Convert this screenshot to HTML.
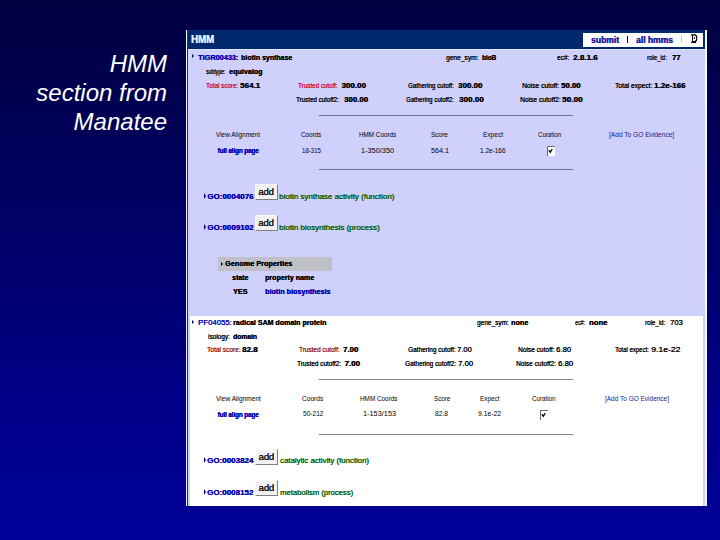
<!DOCTYPE html>
<html><head><meta charset="utf-8"><style>
html,body{margin:0;padding:0;}
body{width:720px;height:540px;overflow:hidden;position:relative;
background:linear-gradient(to bottom,#000040 0%,#00006e 50%,#00008a 76%,#000098 100%);
font-family:"Liberation Sans",sans-serif;}
.t{position:absolute;white-space:nowrap;line-height:1;color:#000;text-shadow:0.35px 0 0 currentColor;}
.r{position:absolute;}
.b{font-weight:bold;}
.thin{text-shadow:none;}
.mid{text-shadow:0.2px 0 0 currentColor;}
.hw{color:#e8f0ff;}
.blue{color:#0000b0;}
.blue2{color:#1a1aa0;}
.blue3{color:#202080;}
.red{color:#d01030;}
.red2{color:#a02020;}
.green{color:#006000;text-shadow:0.3px 0 0 #006000;}
.btn{background:#f2f2f2;border-top:1px solid #fafafa;border-left:1px solid #fafafa;border-right:1.7px solid #808080;border-bottom:1.7px solid #808080;box-sizing:border-box;}
.chk{background:#fff;border-top:1.1px solid #6a6a78;border-left:1px solid #6a6a78;box-sizing:border-box;}
.chk svg{position:absolute;left:-1px;top:-1px;}
.title{position:absolute;right:553px;color:#fff;font-style:italic;font-size:24px;line-height:28.8px;text-align:right;white-space:nowrap;}
</style></head><body>
<div class="title" style="top:50px">HMM<br>section from<br>Manatee</div>
<div class="r" style="left:186px;top:29.8px;width:521px;height:476px;background:#d0d0fc;"></div>
<div class="r" style="left:185.8px;top:29.8px;width:1.3px;height:476px;background:#f4f4ff;"></div>
<div class="r" style="left:187.1px;top:29.8px;width:0.9px;height:476px;background:#20305a;"></div>
<div class="r" style="left:187.5px;top:29.8px;width:517.5px;height:19.2px;background:#00286c;"></div>
<div class="r" style="left:188px;top:49px;width:516.5px;height:0.8px;background:#e0e4ff;"></div>
<div class="r" style="left:704.5px;top:29.8px;width:2.5px;height:476px;background:#f8f8ff;"></div>
<div class="r" style="left:189.7px;top:315.5px;width:513.6px;height:190.3px;background:#ffffff;"></div>
<div class="t b hw" style="left:190.50px;top:34.12px;font-size:11.2px;transform:scaleX(0.86);transform-origin:0 0;">HMM</div>
<div class="r" style="left:582.5px;top:33px;width:120.5px;height:14px;background:#ffffff;"></div>
<div class="t b blue2" style="left:591.00px;top:36.20px;font-size:8.5px;">submit</div>
<div class="r" style="left:627.1px;top:35.8px;width:1.1px;height:7px;background:#000040;"></div>
<div class="t b blue2" style="left:636.00px;top:36.20px;font-size:8.5px;">all hmms</div>
<div class="r" style="left:681px;top:34.5px;width:0.7px;height:8.5px;background:#d0d0d0;"></div>
<svg class="r" style="left:690px;top:33px" width="9" height="11" viewBox="0 0 9 11"><path d="M1.1 1.9 H4.6 Q6.8 1.9 6.8 5.2 Q6.8 8.6 4.6 8.6 H3 M2.5 1.9 V9.2 M1.1 9.5 H6.1" stroke="#000" stroke-width="1.1" fill="none"/><rect x="3.9" y="4.3" width="1.1" height="1.7" fill="#000"/></svg>
<div class="r" style="left:191.9px;top:54.3px;width:0;height:0;border-left:2.8px solid #000060;border-top:2.8px solid transparent;border-bottom:2.8px solid transparent;"></div>
<div class="t blue b" style="left:197.80px;top:53.83px;font-size:8px;transform:scaleX(0.914);transform-origin:0 0;">TIGR00433:</div>
<div class="t  b" style="left:240.50px;top:53.83px;font-size:8px;transform:scaleX(0.872);transform-origin:0 0;">biotin synthase</div>
<div class="t " style="left:446.10px;top:53.83px;font-size:8px;transform:scaleX(0.824);transform-origin:0 0;">gene_sym:</div>
<div class="t  b" style="left:482.00px;top:53.83px;font-size:8px;transform:scaleX(0.792);transform-origin:0 0;">bioB</div>
<div class="t " style="left:556.70px;top:53.83px;font-size:8px;transform:scaleX(0.798);transform-origin:0 0;">ec#:</div>
<div class="t  b" style="left:572.90px;top:53.83px;font-size:8px;transform:scaleX(1.004);transform-origin:0 0;">2.8.1.6</div>
<div class="t " style="left:646.70px;top:53.83px;font-size:8px;transform:scaleX(0.746);transform-origin:0 0;">role_id:</div>
<div class="t  b" style="left:672.00px;top:53.83px;font-size:8px;transform:scaleX(0.944);transform-origin:0 0;">77</div>
<div class="t " style="left:205.80px;top:68.13px;font-size:8px;transform:scaleX(0.636);transform-origin:0 0;">subtype:</div>
<div class="t  b" style="left:228.70px;top:68.13px;font-size:8px;transform:scaleX(0.893);transform-origin:0 0;">equivalog</div>
<div class="t red" style="left:205.80px;top:81.83px;font-size:8px;transform:scaleX(0.787);transform-origin:0 0;">Total score:</div>
<div class="t  b" style="left:240.00px;top:81.83px;font-size:8px;transform:scaleX(1.000);transform-origin:0 0;">564.1</div>
<div class="t red" style="left:298.10px;top:81.83px;font-size:8px;transform:scaleX(0.779);transform-origin:0 0;">Trusted cutoff:</div>
<div class="t  b" style="left:341.40px;top:81.83px;font-size:8px;transform:scaleX(1.000);transform-origin:0 0;">300.00</div>
<div class="t " style="left:407.50px;top:81.83px;font-size:8px;transform:scaleX(0.776);transform-origin:0 0;">Gathering cutoff:</div>
<div class="t  b" style="left:457.80px;top:81.83px;font-size:8px;transform:scaleX(0.988);transform-origin:0 0;">300.00</div>
<div class="t " style="left:521.90px;top:81.83px;font-size:8px;transform:scaleX(0.835);transform-origin:0 0;">Noise cutoff:</div>
<div class="t  b" style="left:560.60px;top:81.83px;font-size:8px;transform:scaleX(0.970);transform-origin:0 0;">50.00</div>
<div class="t " style="left:615.00px;top:81.83px;font-size:8px;transform:scaleX(0.829);transform-origin:0 0;">Total expect:</div>
<div class="t  b" style="left:653.90px;top:81.83px;font-size:8px;transform:scaleX(0.994);transform-origin:0 0;">1.2e-166</div>
<div class="t " style="left:296.40px;top:95.63px;font-size:8px;transform:scaleX(0.775);transform-origin:0 0;">Trusted cutoff2:</div>
<div class="t  b" style="left:343.70px;top:95.63px;font-size:8px;transform:scaleX(0.976);transform-origin:0 0;">300.00</div>
<div class="t " style="left:406.10px;top:95.63px;font-size:8px;transform:scaleX(0.753);transform-origin:0 0;">Gathering cutoff2:</div>
<div class="t  b" style="left:459.40px;top:95.63px;font-size:8px;transform:scaleX(1.008);transform-origin:0 0;">300.00</div>
<div class="t " style="left:520.00px;top:95.63px;font-size:8px;transform:scaleX(0.832);transform-origin:0 0;">Noise cutoff2:</div>
<div class="t  b" style="left:561.70px;top:95.63px;font-size:8px;transform:scaleX(1.025);transform-origin:0 0;">50.00</div>
<div class="r" style="left:318.5px;top:115px;width:254.5px;height:1px;background:#7070a0;"></div>
<div class="t thin" style="left:216.00px;top:130.83px;font-size:8px;transform:scaleX(0.806);transform-origin:0 0;">View Alignment</div>
<div class="t thin" style="left:300.75px;top:130.83px;font-size:8px;transform:scaleX(0.785);transform-origin:0 0;">Coords</div>
<div class="t thin" style="left:358.75px;top:130.83px;font-size:8px;transform:scaleX(0.791);transform-origin:0 0;">HMM Coords</div>
<div class="t thin" style="left:431.00px;top:130.83px;font-size:8px;transform:scaleX(0.813);transform-origin:0 0;">Score</div>
<div class="t thin" style="left:482.50px;top:130.83px;font-size:8px;transform:scaleX(0.816);transform-origin:0 0;">Expect</div>
<div class="t thin" style="left:538.00px;top:130.83px;font-size:8px;transform:scaleX(0.762);transform-origin:0 0;">Curation</div>
<div class="t thin blue3" style="left:608.50px;top:130.83px;font-size:8px;transform:scaleX(0.825);transform-origin:0 0;">[Add To GO Evidence]</div>
<div class="t b blue" style="left:177.75px;width:120px;text-align:center;top:147.03px;font-size:8px;transform:scaleX(0.81);transform-origin:50% 0;letter-spacing:-0.2px;">full align page</div>
<div class="t thin" style="left:302.00px;top:146.63px;font-size:8px;transform:scaleX(0.763);transform-origin:0 0;">18-315</div>
<div class="t thin" style="left:361.00px;top:146.63px;font-size:8px;transform:scaleX(0.917);transform-origin:0 0;">1-350/350</div>
<div class="t thin" style="left:431.00px;top:146.63px;font-size:8px;transform:scaleX(0.900);transform-origin:0 0;">564.1</div>
<div class="t thin" style="left:479.50px;top:146.63px;font-size:8px;transform:scaleX(0.807);transform-origin:0 0;">1.2e-166</div>
<div class="r chk" style="left:547.1px;top:146px;width:8px;height:9.8px;"><svg width="8" height="9.8" viewBox="0 0 8 9.8"><path d="M1.9 4.2 L3.2 6.3 L5.3 3.1" stroke="#000" stroke-width="1.25" fill="none"/></svg></div>
<div class="r" style="left:318.5px;top:169px;width:254.5px;height:1px;background:#7070a0;"></div>
<div class="r" style="left:203.9px;top:192.9px;width:0;height:0;border-left:2.7px solid #000080;border-top:3.0px solid transparent;border-bottom:3.0px solid transparent;"></div>
<div class="t b blue" style="left:207.20px;top:192.83px;font-size:8px;">GO:0004076</div>
<div class="r btn" style="left:255px;top:184.2px;width:22.5px;height:16px;"></div>
<div class="t mid" style="left:258.30px;top:186.96px;font-size:9.5px;letter-spacing:-0.2px;color:#111;">add</div>
<div class="t green" style="left:279.40px;top:193.03px;font-size:8px;transform:scaleX(0.997);transform-origin:0 0;">biotin synthase activity (function)</div>
<div class="r" style="left:203.9px;top:224.3px;width:0;height:0;border-left:2.7px solid #000080;border-top:3.0px solid transparent;border-bottom:3.0px solid transparent;"></div>
<div class="t b blue" style="left:207.20px;top:224.23px;font-size:8px;">GO:0009102</div>
<div class="r btn" style="left:255px;top:215.2px;width:22.5px;height:16px;"></div>
<div class="t mid" style="left:258.30px;top:217.96px;font-size:9.5px;letter-spacing:-0.2px;color:#111;">add</div>
<div class="t green" style="left:279.40px;top:224.43px;font-size:8px;transform:scaleX(0.997);transform-origin:0 0;">biotin biosynthesis (process)</div>
<div class="r" style="left:218.2px;top:257.3px;width:113.6px;height:13.4px;background:#c0c0c8;"></div>
<div class="r" style="left:221.2px;top:261.5px;width:0;height:0;border-left:2.8px solid #000;border-top:2.8px solid transparent;border-bottom:2.8px solid transparent;"></div>
<div class="t  b" style="left:224.75px;top:259.83px;font-size:8px;transform:scaleX(0.910);transform-origin:0 0;">Genome Properties</div>
<div class="t  b" style="left:231.70px;top:273.83px;font-size:8px;transform:scaleX(0.872);transform-origin:0 0;">state</div>
<div class="t  b" style="left:264.70px;top:273.83px;font-size:8px;transform:scaleX(0.883);transform-origin:0 0;">property name</div>
<div class="t  b" style="left:232.60px;top:287.83px;font-size:8px;transform:scaleX(0.900);transform-origin:0 0;">YES</div>
<div class="t blue b" style="left:264.70px;top:287.83px;font-size:8px;transform:scaleX(0.896);transform-origin:0 0;">biotin biosynthesis</div>
<div class="r" style="left:192px;top:319.7px;width:0;height:0;border-left:2.8px solid #000060;border-top:2.8px solid transparent;border-bottom:2.8px solid transparent;"></div>
<div class="t blue" style="left:198.00px;top:318.83px;font-size:8px;transform:scaleX(0.971);transform-origin:0 0;">PF04055:</div>
<div class="t  b" style="left:233.00px;top:318.83px;font-size:8px;transform:scaleX(0.881);transform-origin:0 0;">radical SAM domain protein</div>
<div class="t " style="left:476.80px;top:318.83px;font-size:8px;transform:scaleX(0.808);transform-origin:0 0;">gene_sym:</div>
<div class="t  b" style="left:510.60px;top:318.83px;font-size:8px;transform:scaleX(0.901);transform-origin:0 0;">none</div>
<div class="t " style="left:575.30px;top:318.83px;font-size:8px;transform:scaleX(0.662);transform-origin:0 0;">ec#:</div>
<div class="t  b" style="left:588.90px;top:318.83px;font-size:8px;transform:scaleX(0.963);transform-origin:0 0;">none</div>
<div class="t " style="left:644.50px;top:318.83px;font-size:8px;transform:scaleX(0.771);transform-origin:0 0;">role_id:</div>
<div class="t " style="left:670.10px;top:318.83px;font-size:8px;transform:scaleX(0.940);transform-origin:0 0;">703</div>
<div class="t " style="left:207.80px;top:332.73px;font-size:8px;transform:scaleX(0.797);transform-origin:0 0;">isology:</div>
<div class="t  b" style="left:232.80px;top:332.73px;font-size:8px;transform:scaleX(0.839);transform-origin:0 0;">domain</div>
<div class="t red2" style="left:207.20px;top:345.53px;font-size:8px;transform:scaleX(0.817);transform-origin:0 0;">Total score:</div>
<div class="t  b" style="left:241.70px;top:345.53px;font-size:8px;transform:scaleX(0.994);transform-origin:0 0;">82.8</div>
<div class="t red2" style="left:298.90px;top:345.53px;font-size:8px;transform:scaleX(0.799);transform-origin:0 0;">Trusted cutoff:</div>
<div class="t  b" style="left:342.80px;top:345.53px;font-size:8px;transform:scaleX(0.974);transform-origin:0 0;">7.00</div>
<div class="t " style="left:407.50px;top:345.53px;font-size:8px;transform:scaleX(0.805);transform-origin:0 0;">Gathering cutoff:</div>
<div class="t " style="left:456.70px;top:345.53px;font-size:8px;transform:scaleX(0.936);transform-origin:0 0;">7.00</div>
<div class="t " style="left:517.50px;top:345.53px;font-size:8px;transform:scaleX(0.818);transform-origin:0 0;">Noise cutoff:</div>
<div class="t " style="left:556.25px;top:345.53px;font-size:8px;transform:scaleX(0.962);transform-origin:0 0;">6.80</div>
<div class="t " style="left:615.00px;top:345.53px;font-size:8px;transform:scaleX(0.752);transform-origin:0 0;">Total expect:</div>
<div class="t " style="left:651.25px;top:345.53px;font-size:8px;transform:scaleX(1.079);transform-origin:0 0;">9.1e-22</div>
<div class="t " style="left:297.20px;top:359.63px;font-size:8px;transform:scaleX(0.795);transform-origin:0 0;">Trusted cutoff2:</div>
<div class="t  b" style="left:344.40px;top:359.63px;font-size:8px;transform:scaleX(1.000);transform-origin:0 0;">7.00</div>
<div class="t " style="left:405.00px;top:359.63px;font-size:8px;transform:scaleX(0.800);transform-origin:0 0;">Gathering cutoff2:</div>
<div class="t " style="left:458.30px;top:359.63px;font-size:8px;transform:scaleX(0.962);transform-origin:0 0;">7.00</div>
<div class="t " style="left:515.80px;top:359.63px;font-size:8px;transform:scaleX(0.816);transform-origin:0 0;">Noise cutoff2:</div>
<div class="t " style="left:558.00px;top:359.63px;font-size:8px;transform:scaleX(0.968);transform-origin:0 0;">6.80</div>
<div class="r" style="left:319px;top:379px;width:254px;height:1.3px;background:#888888;"></div>
<div class="t thin" style="left:216.00px;top:394.53px;font-size:8px;transform:scaleX(0.824);transform-origin:0 0;">View Alignment</div>
<div class="t thin" style="left:301.75px;top:394.53px;font-size:8px;transform:scaleX(0.824);transform-origin:0 0;">Coords</div>
<div class="t thin" style="left:359.50px;top:394.53px;font-size:8px;transform:scaleX(0.796);transform-origin:0 0;">HMM Coords</div>
<div class="t thin" style="left:433.75px;top:394.53px;font-size:8px;transform:scaleX(0.778);transform-origin:0 0;">Score</div>
<div class="t thin" style="left:479.50px;top:394.53px;font-size:8px;transform:scaleX(0.796);transform-origin:0 0;">Expect</div>
<div class="t thin" style="left:531.50px;top:394.53px;font-size:8px;transform:scaleX(0.778);transform-origin:0 0;">Curation</div>
<div class="t thin blue3" style="left:605.00px;top:394.53px;font-size:8px;transform:scaleX(0.810);transform-origin:0 0;">[Add To GO Evidence]</div>
<div class="t b blue" style="left:177.75px;width:120px;text-align:center;top:410.83px;font-size:8px;transform:scaleX(0.81);transform-origin:50% 0;letter-spacing:-0.2px;">full align page</div>
<div class="t thin" style="left:302.50px;top:410.33px;font-size:8px;transform:scaleX(0.823);transform-origin:0 0;">50-212</div>
<div class="t thin" style="left:362.50px;top:410.33px;font-size:8px;transform:scaleX(0.917);transform-origin:0 0;">1-153/153</div>
<div class="t thin" style="left:435.00px;top:410.33px;font-size:8px;transform:scaleX(0.833);transform-origin:0 0;">82.8</div>
<div class="t thin" style="left:477.50px;top:410.33px;font-size:8px;transform:scaleX(0.849);transform-origin:0 0;">9.1e-22</div>
<div class="r chk" style="left:540px;top:410px;width:8px;height:9.8px;"><svg width="8" height="9.8" viewBox="0 0 8 9.8"><path d="M1.9 4.2 L3.2 6.3 L5.3 3.1" stroke="#000" stroke-width="1.25" fill="none"/></svg></div>
<div class="r" style="left:319px;top:433.5px;width:254px;height:1.3px;background:#888888;"></div>
<div class="r" style="left:203.6px;top:456.8px;width:0;height:0;border-left:2.7px solid #000080;border-top:3.0px solid transparent;border-bottom:3.0px solid transparent;"></div>
<div class="t b blue" style="left:207.00px;top:456.73px;font-size:8px;">GO:0003824</div>
<div class="r btn" style="left:255.3px;top:449px;width:22.5px;height:16px;"></div>
<div class="t mid" style="left:258.60px;top:451.76px;font-size:9.5px;letter-spacing:-0.2px;color:#111;">add</div>
<div class="t green" style="left:280.30px;top:456.83px;font-size:8px;transform:scaleX(0.975);transform-origin:0 0;">catalytic activity (function)</div>
<div class="r" style="left:203.6px;top:488.8px;width:0;height:0;border-left:2.7px solid #000080;border-top:3.0px solid transparent;border-bottom:3.0px solid transparent;"></div>
<div class="t b blue" style="left:207.00px;top:488.73px;font-size:8px;">GO:0008152</div>
<div class="r btn" style="left:255.3px;top:480.3px;width:22.5px;height:16px;"></div>
<div class="t mid" style="left:258.60px;top:483.06px;font-size:9.5px;letter-spacing:-0.2px;color:#111;">add</div>
<div class="t green" style="left:280.30px;top:488.83px;font-size:8px;transform:scaleX(0.954);transform-origin:0 0;">metabolism (process)</div>
</body></html>
